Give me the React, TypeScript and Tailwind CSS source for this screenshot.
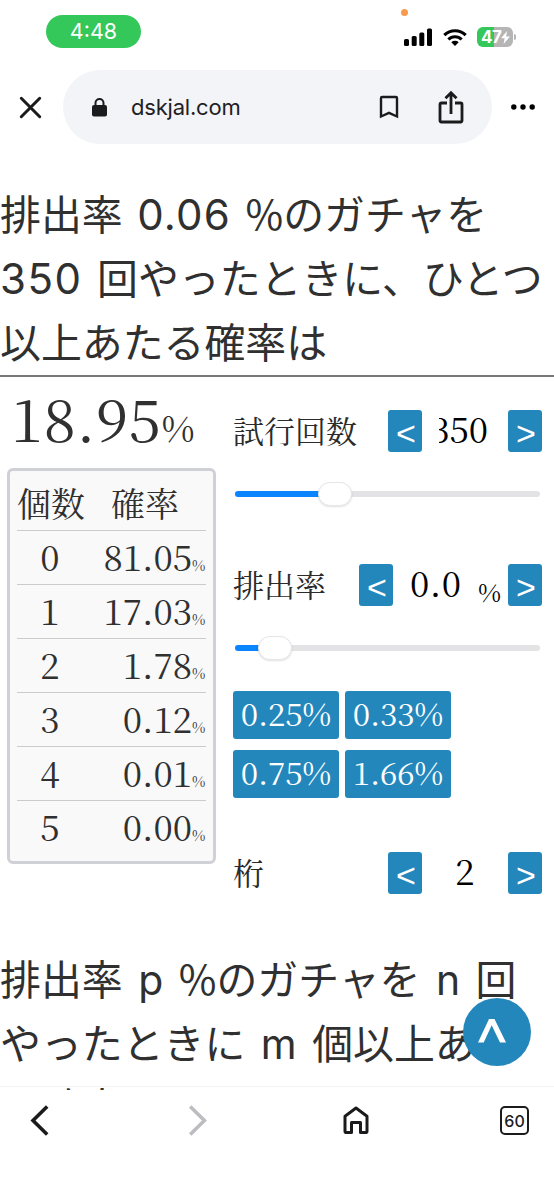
import clsx from "clsx";
import type React from "react";

const SERIF = "font-['Noto_Serif_CJK_JP','Liberation_Serif',serif]";

const rows = [
  { count: 0, rate: "81.05" },
  { count: 1, rate: "17.03" },
  { count: 2, rate: "1.78" },
  { count: 3, rate: "0.12" },
  { count: 4, rate: "0.01" },
  { count: 5, rate: "0.00" },
];

const presets = ["0.25%", "0.33%", "0.75%", "1.66%"];

function StatusBar() {
  return (
    <div className="relative flex h-[70px] items-start justify-between pl-[46px] pr-[38px]">
      <div className="mt-[15px] flex h-[33px] w-[95px] items-center justify-center rounded-full bg-[#34c759] text-[21.5px] text-white">
        4:48
      </div>
      <span className="absolute left-[401px] top-[9px] size-[7px] rounded-full bg-[#f79a4b]" />
      <div className="mt-[27px] flex items-center">
        <svg width="28" height="18" viewBox="0 0 28 18" className="mr-[11px]">
          <rect x="0" y="11" width="5" height="7" rx="1.5" />
          <rect x="7.7" y="8" width="5" height="10" rx="1.5" />
          <rect x="15.3" y="4.5" width="5" height="13.5" rx="1.5" />
          <rect x="23" y="0.5" width="5" height="17.5" rx="1.5" />
        </svg>
        <svg width="24" height="18" viewBox="0 0 24 18" className="mr-[10px]">
          <g fill="none" stroke="#000" strokeWidth="3.1">
            <path d="M1.3 7.2a15.2 15.2 0 0 1 21.4 0" />
            <path d="M5.4 11.5a9.4 9.4 0 0 1 13.2 0" />
          </g>
          <path d="M8.3 14.2a5.4 5.4 0 0 1 7.4 0L12 18z" />
        </svg>
        <div className="flex h-[20px] w-[36px] items-center rounded-[6px] bg-[linear-gradient(90deg,#34c759_47%,#b5b5b5_47%)] pl-[4px] text-[17px] font-bold leading-none text-white">
          <span className="tracking-[-0.6px]">47</span>
          <svg width="9" height="13" viewBox="0 0 9 13" fill="#fff">
            <path d="M6 0 0 7.2h3.6L2.6 13 9 5.5H5.2z" />
          </svg>
        </div>
        <span className="ml-[1px] h-[6px] w-[2px] rounded-r-full bg-[#b5b5b5]" />
      </div>
    </div>
  );
}

function AddressBar() {
  return (
    <div className="flex h-[74px] items-center">
      <svg
        width="23"
        height="23"
        viewBox="0 0 23 23"
        className="ml-[19px] mr-[21px]"
        stroke="#1b1b1d"
        strokeWidth="3"
        strokeLinecap="round"
      >
        <path d="M2.3 2.3 20.7 20.7M20.7 2.3 2.3 20.7" />
      </svg>
      <div className="flex h-[74px] w-[429px] items-center rounded-full bg-[#f3f4f7] pl-[29px]">
        <svg width="15" height="19" viewBox="0 0 15 19" className="mr-[24px]">
          <rect x="0" y="7" width="15" height="11.5" rx="2" fill="#1b1b1d" />
          <path
            d="M3.5 8V5a4 4 0 0 1 8 0v3"
            fill="none"
            stroke="#1b1b1d"
            strokeWidth="2"
          />
        </svg>
        <span className="w-[248px] text-[22px] tracking-[-0.2px] text-[#1f2023]">
          dskjal.com
        </span>
        <svg
          width="20"
          height="24"
          viewBox="0 0 20 24"
          fill="none"
          stroke="#1b1b1d"
          strokeWidth="2.4"
          className="mr-[39px]"
        >
          <path d="M2 21.5V3.2Q2 2 3.2 2h13.6Q18 2 18 3.2v18.3l-8-3.6z" />
        </svg>
        <svg
          width="26"
          height="34"
          viewBox="0 0 26 34"
          fill="none"
          stroke="#1b1b1d"
          strokeWidth="2.8"
        >
          <path d="M9 13H3.4Q2 13 2 14.4v16.2Q2 32 3.4 32h19.2q1.4 0 1.4-1.4V14.4Q24 13 22.6 13H17" />
          <path d="M13 24V2.5M7.5 8.2 13 2.7l5.5 5.5" />
        </svg>
      </div>
      <svg width="24" height="6" viewBox="0 0 24 6" className="ml-[19px]">
        <circle cx="2.8" cy="3" r="2.7" />
        <circle cx="12" cy="3" r="2.7" />
        <circle cx="21.2" cy="3" r="2.7" />
      </svg>
    </div>
  );
}

function StepButton({ children }: { children: React.ReactNode }) {
  return (
    <button
      type="button"
      className="flex h-[42px] w-[34px] shrink-0 items-center justify-center rounded-[3px] bg-[#2487bc] pl-[2px] pt-[3px] font-['Liberation_Sans',sans-serif] text-[34px] leading-none text-white"
    >
      {children}
    </button>
  );
}

function Label({ children }: { children: React.ReactNode }) {
  return (
    <span className="flex-1 pb-[4px] text-[31px] text-[#2b2b2b]">
      {children}
    </span>
  );
}

function Slider({ value }: { value: number }) {
  return (
    <div className="relative ml-[2px] flex h-[24px] w-[305px] items-center">
      <div className="h-[6px] w-full overflow-hidden rounded-full bg-[#e3e3e6]">
        <div
          className="h-full bg-[#0a84ff]"
          style={{ width: `${value + 17}px` }}
        />
      </div>
      <span
        className="absolute top-0 h-[24px] w-[34px] rounded-full border border-[#e6e6e8] bg-white shadow-[0_1px_2px_rgba(0,0,0,0.12)]"
        style={{ left: `${value}px` }}
      />
    </div>
  );
}

function RateTable() {
  return (
    <div className="mt-[12px] h-[396px] w-[209px] rounded-[6px] border-[3px] border-[#d0d1d6] bg-[#f9f9f9] px-[7px] pt-[6px]">
      <div className="flex h-[54px] items-center border-b border-[#ccc] pb-[2px] text-[34px] leading-none">
        <span>個数</span>
        <span className="ml-[26px]">確率</span>
      </div>
      {rows.map((row) => (
        <div
          key={row.count}
          className="flex h-[54px] items-baseline border-b border-[#ccc] text-[35px] leading-[51px] last:border-0"
        >
          <span className="w-[66px] text-center">{row.count}</span>
          <span className="flex-1 text-right">{row.rate}</span>
          <span className="w-[14px] text-[14.5px] leading-none">%</span>
        </div>
      ))}
    </div>
  );
}

function Controls() {
  return (
    <div className="ml-[17px] w-[309px] pt-[33px] text-[35px] leading-none text-black">
      <div className="flex h-[42px] items-center">
        <Label>試行回数</Label>
        <StepButton>&lt;</StepButton>
        <div className="ml-[17px] mr-[20px] flex w-[49px] justify-end overflow-hidden pb-[5px]">
          350
        </div>
        <StepButton>&gt;</StepButton>
      </div>
      <div className="mt-[30px]">
        <Slider value={83} />
      </div>
      <div className="mt-[58px] flex h-[42px] items-center">
        <Label>排出率</Label>
        <StepButton>&lt;</StepButton>
        <span className="ml-[17px] w-[67px] pb-[5px] tracking-[0.5px]">
          0.0
        </span>
        <span className="w-[31px] pl-px pt-[12px] text-[25px]">%</span>
        <StepButton>&gt;</StepButton>
      </div>
      <div className="mt-[30px]">
        <Slider value={23} />
      </div>
      <div className="mt-[31px] grid w-[218px] grid-cols-2 gap-x-[6px] gap-y-[11px]">
        {presets.map((preset) => (
          <button
            key={preset}
            type="button"
            className="h-[48px] rounded-[3px] bg-[#2487bc] pb-[4px] text-[31.5px] leading-none tracking-[-0.2px] text-white"
          >
            {preset}
          </button>
        ))}
      </div>
      <div className="mt-[54px] flex h-[42px] items-center">
        <Label>桁</Label>
        <StepButton>&lt;</StepButton>
        <span className="w-[86px] pb-[5px] text-center">2</span>
        <StepButton>&gt;</StepButton>
      </div>
    </div>
  );
}

function BottomBar() {
  return (
    <div className="flex h-[110px] items-start bg-white pt-[15px]">
      <svg
        width="20"
        height="31"
        viewBox="0 0 20 31"
        fill="none"
        stroke="#1b1b1d"
        strokeWidth="3.6"
        className="ml-[30px]"
      >
        <path d="M17.2 1.5 3 15.5l14.2 14" />
      </svg>
      <svg
        width="20"
        height="31"
        viewBox="0 0 20 31"
        fill="none"
        stroke="#bcbdc0"
        strokeWidth="3.6"
        className="ml-[138px]"
      >
        <path d="M2.2 1.5l14.2 14-14.2 14" />
      </svg>
      <svg
        width="26"
        height="28"
        viewBox="0 0 26 28"
        fill="none"
        stroke="#1b1b1d"
        strokeWidth="3"
        strokeLinejoin="round"
        className="ml-[135px] mt-px"
      >
        <path d="M2 10.2 13 2l11 8.2v15q0 1.3-1.3 1.3h-5.2v-10h-9v10H3.3Q2 26.5 2 25.2z" />
      </svg>
      <div className="ml-[131px] mt-px flex size-[29px] items-center justify-center rounded-[5px] border-[2.5px] border-[#1b1b1d] text-[16px] font-medium text-[#1b1b1d]">
        60
      </div>
    </div>
  );
}

function Percent() {
  return <span className="font-['Noto_Sans_CJK_JP',sans-serif]">%</span>;
}

export default function App() {
  return (
    <div className="h-[1200px] w-[554px] overflow-hidden bg-white font-['Inter','Noto_Sans_CJK_JP',sans-serif]">
      <StatusBar />
      <AddressBar />
      <main className="relative h-[946px] overflow-hidden pt-[37px] text-[#303030]">
        <h2 className="h-[196px] whitespace-nowrap border-b-2 border-[#777] text-[40.9px] leading-[64px] [word-spacing:3px]">
          排出率 <span className="text-[42px] tracking-[1.2px]">0.06</span>{" "}
          <Percent />
          のガチャを
          <br />
          <span className="text-[42px] tracking-[1.5px]">350</span>{" "}
          回やったときに、ひとつ
          <br />
          以上あたる確率は
        </h2>
        <div className={clsx("flex", SERIF)}>
          <div className="ml-[7px] w-[209px]">
            <div className="flex h-[79px] items-baseline pl-[4px]">
              <span className="text-[58px] leading-[80px] tracking-[0.8px]">
                18.95
              </span>
              <span className="text-[36px] leading-none">%</span>
            </div>
            <RateTable />
          </div>
          <Controls />
        </div>
        <h2 className="mt-[52px] whitespace-nowrap text-[40.9px] leading-[64px] [word-spacing:4px]">
          排出率 p <Percent />
          のガチャを n 回
          <br />
          やったときに m 個以上あた
          <br />
          る確率は
        </h2>
        <span className="absolute left-0 top-[942px] h-px w-full bg-[#f2f2f4]" />
        <button
          type="button"
          className="absolute left-[463px] top-[854px] size-[68px] rounded-full bg-[#2487bc]"
        >
          <svg
            width="28"
            height="24"
            viewBox="0 0 28 24"
            fill="#fff"
            className="ml-[15px] mt-[-3px]"
          >
            <path d="M11 0h5.5L28 23.5h-6L13.7 6.3 5.7 23.5H0z" />
          </svg>
        </button>
      </main>
      <BottomBar />
    </div>
  );
}
